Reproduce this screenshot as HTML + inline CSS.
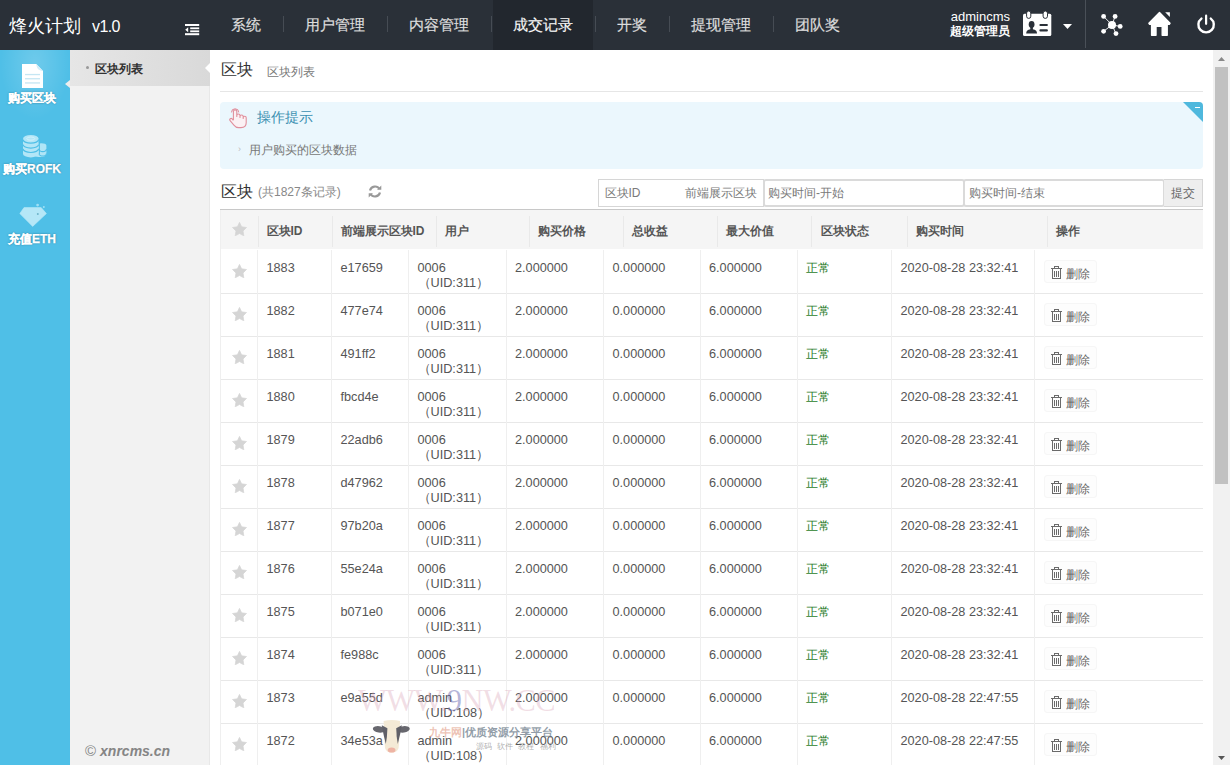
<!DOCTYPE html>
<html><head><meta charset="utf-8">
<style>
*{margin:0;padding:0;box-sizing:border-box}
html,body{width:1230px;height:765px;overflow:hidden;background:#fff;font-family:"Liberation Sans",sans-serif;font-size:12px;color:#555}
.a{position:absolute}
svg{display:block}
#hdr{position:absolute;left:0;top:0;width:1230px;height:50px;background:#2a3038}
.logo{position:absolute;left:9px;top:13.7px;color:#fff;font-size:18px;white-space:nowrap}
.logo span{font-size:16px;margin-left:11px;letter-spacing:-0.6px}
.nav{position:absolute;top:0;height:50px;line-height:49.5px;color:#ddd;font-size:15px;padding:0 20px;white-space:nowrap;-webkit-text-stroke:0.2px #ddd}
.nav.act{background:#22272e;color:#fff}
.nsep{position:absolute;top:16px;width:1px;height:15.5px;background:#464c54}
#side{position:absolute;left:0;top:50px;width:70px;height:715px;background:#4fbfe7}
.sitem{position:absolute;left:-3px;width:70px;text-align:center;color:#fff;font-weight:bold;font-size:12px;text-shadow:0 0 2px rgba(0,40,60,.55);-webkit-text-stroke:0.25px #fff;white-space:nowrap}
#sub{position:absolute;left:70px;top:50px;width:140px;height:715px;background:#f2f2f2;border-right:1px solid #e8e8e8}
.subact{position:absolute;left:70px;top:50px;width:140px;height:36px;background:linear-gradient(to right,#e6e6e6,#d9d9d9)}
.copy{position:absolute;left:85px;top:742px;color:#858585;font-size:14px;font-style:italic;font-weight:bold;white-space:nowrap}
.copy b{font-style:normal;font-weight:normal;font-size:15px;margin-right:4px}
.title{position:absolute;left:221px;top:60.3px;font-size:16px;color:#333}
.title small{font-size:12px;color:#777;margin-left:13.5px;position:relative;top:0.7px}
.hr{position:absolute;left:220px;top:91px;width:983px;height:1px;background:#e6e6e6}
.tip{position:absolute;left:220px;top:102px;width:983px;height:67px;background:#ebf7fd;border-radius:4px;overflow:hidden}
.thead{position:absolute;background:#f5f5f5}
.tborder{position:absolute;left:220px;top:208.5px;width:983px;height:1.5px;background:#c8c8c8}
.vsep{position:absolute;width:1px;background:#efefef}
.vsep.h{background:#e9e9e9}
.hline{position:absolute;height:1px;background:#e8e8e8}
.th{position:absolute;font-weight:bold;color:#555;white-space:nowrap}
.td{position:absolute;color:#555;line-height:15px;white-space:nowrap;font-size:12.7px}
.td .uid{font-size:12.7px}
.td .ok{font-size:12px;position:relative;left:-0.5px}
.uid{margin-left:0}
.ok{color:#2a7d2a}
.hstar,.bstar{position:absolute;line-height:0}
.del{position:absolute;width:53px;height:23px;border:1px solid #f6f6f6;border-radius:3px;background:#fdfdfd;color:#666;padding:5px 0 0 6px;white-space:nowrap;line-height:13px}
.del span{position:relative;top:1.5px}
.del svg{display:inline-block;vertical-align:top;margin-right:4px}
.inp{position:absolute;top:179px;height:28px;border:2px solid #dadada;border-radius:3px;background:#fff;color:#7a7a7a;line-height:25px;padding-left:4.5px;white-space:nowrap}
.btn{position:absolute;left:1164px;top:179px;width:39px;height:28px;border:1px solid #d6d6d6;border-left:0;background:#eee;color:#666;line-height:27px;text-align:center}
#sb{position:absolute;left:1213px;top:50px;width:17px;height:715px;background:#f1f1f1}
#thumb{position:absolute;left:1215px;top:67px;width:13px;height:417px;background:#c1c1c1}
</style></head><body>
<div id="hdr"></div>
<div class="logo">烽火计划<span>v1.0</span></div>
<div class="a" style="left:185px;top:24px"><svg width="15" height="12" viewBox="0 0 15 12"><rect x="0" y="0" width="14.2" height="2" fill="#fff"/><rect x="5.2" y="3.4" width="9" height="1.8" fill="#fff"/><rect x="5.2" y="6.4" width="9" height="1.8" fill="#fff"/><rect x="0" y="9.2" width="14.2" height="2" fill="#fff"/><path d="M3.2 3.3L0.2 5.8L3.2 8.3z" fill="#fff"/></svg></div>
<div class="nav" style="left:211px">系统</div>
<div class="nsep" style="left:283px"></div>
<div class="nav" style="left:285px">用户管理</div>
<div class="nsep" style="left:387px"></div>
<div class="nav" style="left:389px">内容管理</div>
<div class="nsep" style="left:491px"></div>
<div class="nav act" style="left:493px">成交记录</div>
<div class="nsep" style="left:595px"></div>
<div class="nav" style="left:597px">开奖</div>
<div class="nsep" style="left:669px"></div>
<div class="nav" style="left:671px">提现管理</div>
<div class="nsep" style="left:773px"></div>
<div class="nav" style="left:775px">团队奖</div>
<div class="a" style="left:940px;top:10px;width:70px;text-align:right;color:#fff;font-size:13px;line-height:14px">admincms</div>
<div class="a" style="left:940px;top:24px;width:70px;text-align:right;color:#fff;font-size:12px;font-weight:bold;line-height:14px">超级管理员</div>
<div class="a" style="left:1023px;top:11px"><svg width="29" height="26" viewBox="0 0 29 26">
<rect x="0" y="2.8" width="28.3" height="22.3" rx="1.5" fill="#fff"/>
<rect x="3.6" y="0" width="4.2" height="7.4" rx="2.1" fill="#fff" stroke="#2a3038" stroke-width="1"/>
<rect x="20.1" y="0" width="4.4" height="7.4" rx="2.2" fill="#fff" stroke="#2a3038" stroke-width="1"/>
<ellipse cx="8.6" cy="13.4" rx="2.9" ry="3.4" fill="#2a3038"/><rect x="7.3" y="15.5" width="2.6" height="3.5" fill="#2a3038"/><path d="M3.2 22.6C3.2 19.2 5.5 18.3 8.6 18.3S14 19.2 14 22.6z" fill="#2a3038"/>
<rect x="16.4" y="13.1" width="8.5" height="1.9" rx="0.9" fill="#2a3038"/><rect x="16.4" y="18.3" width="8.5" height="2.1" rx="1" fill="#2a3038"/></svg></div>
<div class="a" style="left:1063px;top:24px"><svg width="9" height="5"><path d="M0 0h9L4.5 5z" fill="#fff"/></svg></div>
<div class="a" style="left:1085px;top:0;width:1px;height:48px;background:#4a5058"></div>
<div class="a" style="left:1099px;top:12px"><svg width="26" height="26" viewBox="0 0 26 26">
<g stroke="#fff" stroke-width="0.9"><line x1="13" y1="12.9" x2="4.6" y2="4.4"/><line x1="13" y1="12.9" x2="16.1" y2="4.4"/><line x1="13" y1="12.9" x2="21.2" y2="14.4"/><line x1="13" y1="12.9" x2="4.6" y2="19.3"/><line x1="13" y1="12.9" x2="17" y2="21.6"/></g>
<g fill="#fff"><circle cx="13" cy="12.9" r="4"/><circle cx="4.6" cy="4.4" r="2.4"/><circle cx="16.1" cy="4.4" r="2.4"/><circle cx="21.2" cy="14.4" r="2.4"/><circle cx="4.6" cy="19.3" r="2.4"/><circle cx="17" cy="21.6" r="2.4"/></g></svg></div>
<div class="a" style="left:1144px;top:8px"><svg width="32" height="32" viewBox="0 0 32 32"><path d="M15.5 4.6L4.9 15.3L5.6 16.3H7.6V27.2H12V18.2H18.2V27.2H23.2V16.3H25.3L26 15.3z" fill="#fff" stroke="#fff" stroke-width="1.4" stroke-linejoin="round"/><path d="M21.2 4.2H25.9V9z" fill="#fff"/></svg></div>
<div class="a" style="left:1196px;top:14px"><svg width="21" height="21" viewBox="0 0 21 21"><path d="M5.4 4.6A7.7 7.7 0 1 0 14.8 4.6" fill="none" stroke="#fff" stroke-width="2.4" stroke-linecap="round"/><line x1="10.1" y1="1.7" x2="10.1" y2="9.8" stroke="#fff" stroke-width="2.2" stroke-linecap="round"/></svg></div>

<div id="side"></div>
<div class="a" style="left:0;top:50px;width:70px;height:70px;background:radial-gradient(ellipse at 50% 20%,rgba(255,255,255,.18),rgba(255,255,255,0) 70%)"></div>
<div class="a" style="left:22px;top:64px"><svg width="21" height="24" viewBox="0 0 21 24"><path d="M0 0h14.3l6.7 7v17H0z" fill="#fff"/><path d="M14.3 0C14.6 4.2 16.3 6.6 21 7z" fill="#d2edf8"/><g fill="#c5e6f3"><rect x="3" y="9.9" width="15" height="1.3"/><rect x="3" y="14.1" width="15" height="1.3"/><rect x="3" y="18.3" width="15" height="1.3"/></g></svg></div>
<div class="sitem" style="top:90px">购买区块</div>
<div class="a" style="left:22.5px;top:134.5px"><svg width="24" height="23" viewBox="0 0 24 23">
<g fill="#b0e5f6"><path d="M12 10.5C14 7.5 23.4 7.5 23.4 10.5V19.2C23.4 22.6 14 22.8 12 21z"/></g>
<path d="M16 14a3.7 2.6 0 0 0 7.4 0M16 18.4a3.7 2.6 0 0 0 7.4 0" fill="none" stroke="#4fbfe7" stroke-width="1.1"/>
<g fill="#b3e6f7"><path d="M0 3.7A7.8 3.7 0 0 1 15.6 3.7V18.7A7.8 3.7 0 0 1 0 18.7z"/></g>
<path d="M0 4.5a7.8 3.7 0 0 0 15.6 0M0 9.4a7.8 3.7 0 0 0 15.6 0M0 13.8a7.8 3.7 0 0 0 15.6 0" fill="none" stroke="#4fbfe7" stroke-width="1.2"/>
<path d="M16.4 4.5V19" stroke="#4fbfe7" stroke-width="1"/>
<ellipse cx="7.8" cy="3.6" rx="4" ry="1.6" fill="none" stroke="#d5f2fb" stroke-width=".8"/></svg></div>
<div class="sitem" style="top:161px">购买ROFK</div>
<div class="a" style="left:19px;top:203px"><svg width="28" height="24" viewBox="0 0 28 24"><path d="M5 4.6H22.2L27.4 10.6L13.7 23.4L0.8 10.6z" fill="#b5e7f7" stroke="#b5e7f7" stroke-width=".6" stroke-linejoin="round"/><circle cx="18.6" cy="2.1" r="1.4" fill="#9fe0f6"/><circle cx="24.8" cy="3.9" r="1" fill="#9fe0f6"/><circle cx="18.8" cy="11" r="1" fill="#6fb5c9"/></svg></div>
<div class="sitem" style="top:231px">充值ETH</div>
<div class="a" style="left:65px;top:80px;width:0;height:0;border-top:4px solid transparent;border-bottom:4px solid transparent;border-right:5px solid #ededed"></div>

<div id="sub"></div>
<div class="subact"></div>
<div class="a" style="left:86px;top:66px;width:3px;height:3px;border-radius:50%;background:#999"></div>
<div class="a" style="left:95px;top:61px;font-weight:bold;color:#333;font-size:12px">区块列表</div>
<div class="a" style="left:205px;top:63px;width:0;height:0;border-top:5px solid transparent;border-bottom:5px solid transparent;border-right:5px solid #fff"></div>
<div class="copy"><b>©</b>xnrcms.cn</div>

<div class="title">区块<small>区块列表</small></div>
<div class="hr"></div>
<div class="tip">
<div class="a" style="right:0;top:0;width:0;height:0;border-top:20px solid #4fb8dd;border-left:20px solid transparent"></div>
<div class="a" style="right:3px;top:5px;width:5px;height:1px;background:#fff"></div>
</div>
<div class="a" style="left:229px;top:107px"><svg width="19" height="22" viewBox="0 0 19 22"><path d="M4.4 13V4.6A1.7 1.7 0 0 1 7.8 4.6V9.4V8.6A1.6 1.6 0 0 1 11 8.6V10.4V9.6A1.6 1.6 0 0 1 14.2 9.6V11.4V10.8A1.5 1.5 0 0 1 17.2 10.8V15.8C17.2 19 15 20.6 12 20.6H9.6C7.4 20.6 6.1 19.7 4.9 18.1L1.1 13.6A1.3 1.3 0 0 1 3.1 11.9L4.4 13.4" fill="#fbf1f4" stroke="#e08f9c" stroke-width="1.1" stroke-linejoin="round"/><path d="M2.5 5.4A3.6 3.6 0 0 1 9.7 5.4" fill="none" stroke="#e08796" stroke-width="1"/></svg></div>
<div class="a" style="left:257px;top:109px;font-size:14px;color:#3a8fb0">操作提示</div>
<div class="a" style="left:238px;top:144px;font-size:9px;color:#bbb">›</div>
<div class="a" style="left:249px;top:142px;font-size:12px;color:#777">用户购买的区块数据</div>

<div class="a" style="left:221px;top:182px;font-size:16px;color:#333">区块</div>
<div class="a" style="left:258px;top:184px;font-size:12px;color:#888">(共1827条记录)</div>
<div class="a" style="left:368px;top:185px"><svg width="14" height="13" viewBox="0 0 14 13"><path d="M2 5.5A5.2 5.2 0 0 1 11.5 4M12 7.5A5.2 5.2 0 0 1 2.5 9" fill="none" stroke="#999" stroke-width="2.2"/><path d="M9 4.8h4.3V0.5zM5 8.2H0.7v4.3z" fill="#999"/></svg></div>
<div class="inp" style="left:598px;width:166px;border:1px solid #d6d6d6;border-radius:0;line-height:27px;padding-left:5.5px">区块ID<span style="position:absolute;left:86px">前端展示区块</span></div>
<div class="inp" style="left:763px;width:202px;padding-left:3px">购买时间-开始</div>
<div class="inp" style="left:963px;width:202px;padding-left:4px">购买时间-结束</div>
<div class="btn">提交</div>
<div class="tborder"></div>
<div class="thead" style="left:220px;top:210px;width:983px;height:39px"></div>
<div class="vsep h" style="left:257.5px;top:216px;height:31px"></div>
<div class="vsep h" style="left:331.5px;top:216px;height:31px"></div>
<div class="vsep h" style="left:435.5px;top:216px;height:31px"></div>
<div class="vsep h" style="left:528.5px;top:216px;height:31px"></div>
<div class="vsep h" style="left:623.0px;top:216px;height:31px"></div>
<div class="vsep h" style="left:717.0px;top:216px;height:31px"></div>
<div class="vsep h" style="left:810.8px;top:216px;height:31px"></div>
<div class="vsep h" style="left:906.9px;top:216px;height:31px"></div>
<div class="vsep h" style="left:1047.0px;top:216px;height:31px"></div>
<div class="hstar" style="left:231.5px;top:221.5px"><svg width="15" height="14" viewBox="0 0 24 22.4"><path d="M12 0.6l3.4 7.1 7.8 1.1-5.6 5.5 1.3 7.8L12 18.4l-6.9 3.7 1.3-7.8L0.8 8.8l7.8-1.1z" fill="#d5d5d5" stroke="#d5d5d5" stroke-width="1.2" stroke-linejoin="round"/></svg></div>
<div class="th" style="left:266.5px;top:222.5px">区块ID</div>
<div class="th" style="left:340.5px;top:222.5px">前端展示区块ID</div>
<div class="th" style="left:444.5px;top:222.5px">用户</div>
<div class="th" style="left:537.5px;top:222.5px">购买价格</div>
<div class="th" style="left:632.0px;top:222.5px">总收益</div>
<div class="th" style="left:726.0px;top:222.5px">最大价值</div>
<div class="th" style="left:821.3px;top:222.5px">区块状态</div>
<div class="th" style="left:915.9px;top:222.5px">购买时间</div>
<div class="th" style="left:1056.0px;top:222.5px">操作</div>
<div class="hline" style="left:220px;top:293px;width:983px"></div>
<div class="bstar" style="left:231.5px;top:263.5px"><svg width="15" height="14" viewBox="0 0 24 22.4"><path d="M12 0.6l3.4 7.1 7.8 1.1-5.6 5.5 1.3 7.8L12 18.4l-6.9 3.7 1.3-7.8L0.8 8.8l7.8-1.1z" fill="#d5d5d5" stroke="#d5d5d5" stroke-width="1.2" stroke-linejoin="round"/></svg></div>
<div class="td" style="left:266.5px;top:261px">1883</div>
<div class="td" style="left:340.5px;top:261px">e17659</div>
<div class="td" style="left:417.5px;top:261px">0006<br><span class="uid">（UID:311）</span></div>
<div class="td" style="left:515.0px;top:261px">2.000000</div>
<div class="td" style="left:612.5px;top:261px">0.000000</div>
<div class="td" style="left:709.0px;top:261px">6.000000</div>
<div class="td" style="left:806.0px;top:261px"><span class="ok">正常</span></div>
<div class="td" style="left:900.5px;top:261px">2020-08-28 23:32:41</div>
<div class="del" style="left:1044px;top:260px"><svg width="11" height="13" viewBox="0 0 11 13" fill="#6a6a6a"><rect x="0" y="2" width="11" height="1"/><rect x="3" y="0" width="5" height="1"/><rect x="3" y="0" width="1" height="2"/><rect x="7" y="0" width="1" height="2"/><rect x="1" y="3" width="1" height="10"/><rect x="9" y="3" width="1" height="10"/><rect x="1" y="12" width="9" height="1"/><rect x="3" y="5" width="1" height="6"/><rect x="5" y="5" width="1" height="6"/><rect x="7" y="5" width="1" height="6"/></svg><span>删除</span></div>
<div class="hline" style="left:220px;top:336px;width:983px"></div>
<div class="bstar" style="left:231.5px;top:306.5px"><svg width="15" height="14" viewBox="0 0 24 22.4"><path d="M12 0.6l3.4 7.1 7.8 1.1-5.6 5.5 1.3 7.8L12 18.4l-6.9 3.7 1.3-7.8L0.8 8.8l7.8-1.1z" fill="#d5d5d5" stroke="#d5d5d5" stroke-width="1.2" stroke-linejoin="round"/></svg></div>
<div class="td" style="left:266.5px;top:304px">1882</div>
<div class="td" style="left:340.5px;top:304px">477e74</div>
<div class="td" style="left:417.5px;top:304px">0006<br><span class="uid">（UID:311）</span></div>
<div class="td" style="left:515.0px;top:304px">2.000000</div>
<div class="td" style="left:612.5px;top:304px">0.000000</div>
<div class="td" style="left:709.0px;top:304px">6.000000</div>
<div class="td" style="left:806.0px;top:304px"><span class="ok">正常</span></div>
<div class="td" style="left:900.5px;top:304px">2020-08-28 23:32:41</div>
<div class="del" style="left:1044px;top:303px"><svg width="11" height="13" viewBox="0 0 11 13" fill="#6a6a6a"><rect x="0" y="2" width="11" height="1"/><rect x="3" y="0" width="5" height="1"/><rect x="3" y="0" width="1" height="2"/><rect x="7" y="0" width="1" height="2"/><rect x="1" y="3" width="1" height="10"/><rect x="9" y="3" width="1" height="10"/><rect x="1" y="12" width="9" height="1"/><rect x="3" y="5" width="1" height="6"/><rect x="5" y="5" width="1" height="6"/><rect x="7" y="5" width="1" height="6"/></svg><span>删除</span></div>
<div class="hline" style="left:220px;top:379px;width:983px"></div>
<div class="bstar" style="left:231.5px;top:349.5px"><svg width="15" height="14" viewBox="0 0 24 22.4"><path d="M12 0.6l3.4 7.1 7.8 1.1-5.6 5.5 1.3 7.8L12 18.4l-6.9 3.7 1.3-7.8L0.8 8.8l7.8-1.1z" fill="#d5d5d5" stroke="#d5d5d5" stroke-width="1.2" stroke-linejoin="round"/></svg></div>
<div class="td" style="left:266.5px;top:347px">1881</div>
<div class="td" style="left:340.5px;top:347px">491ff2</div>
<div class="td" style="left:417.5px;top:347px">0006<br><span class="uid">（UID:311）</span></div>
<div class="td" style="left:515.0px;top:347px">2.000000</div>
<div class="td" style="left:612.5px;top:347px">0.000000</div>
<div class="td" style="left:709.0px;top:347px">6.000000</div>
<div class="td" style="left:806.0px;top:347px"><span class="ok">正常</span></div>
<div class="td" style="left:900.5px;top:347px">2020-08-28 23:32:41</div>
<div class="del" style="left:1044px;top:346px"><svg width="11" height="13" viewBox="0 0 11 13" fill="#6a6a6a"><rect x="0" y="2" width="11" height="1"/><rect x="3" y="0" width="5" height="1"/><rect x="3" y="0" width="1" height="2"/><rect x="7" y="0" width="1" height="2"/><rect x="1" y="3" width="1" height="10"/><rect x="9" y="3" width="1" height="10"/><rect x="1" y="12" width="9" height="1"/><rect x="3" y="5" width="1" height="6"/><rect x="5" y="5" width="1" height="6"/><rect x="7" y="5" width="1" height="6"/></svg><span>删除</span></div>
<div class="hline" style="left:220px;top:422px;width:983px"></div>
<div class="bstar" style="left:231.5px;top:392.5px"><svg width="15" height="14" viewBox="0 0 24 22.4"><path d="M12 0.6l3.4 7.1 7.8 1.1-5.6 5.5 1.3 7.8L12 18.4l-6.9 3.7 1.3-7.8L0.8 8.8l7.8-1.1z" fill="#d5d5d5" stroke="#d5d5d5" stroke-width="1.2" stroke-linejoin="round"/></svg></div>
<div class="td" style="left:266.5px;top:390px">1880</div>
<div class="td" style="left:340.5px;top:390px">fbcd4e</div>
<div class="td" style="left:417.5px;top:390px">0006<br><span class="uid">（UID:311）</span></div>
<div class="td" style="left:515.0px;top:390px">2.000000</div>
<div class="td" style="left:612.5px;top:390px">0.000000</div>
<div class="td" style="left:709.0px;top:390px">6.000000</div>
<div class="td" style="left:806.0px;top:390px"><span class="ok">正常</span></div>
<div class="td" style="left:900.5px;top:390px">2020-08-28 23:32:41</div>
<div class="del" style="left:1044px;top:389px"><svg width="11" height="13" viewBox="0 0 11 13" fill="#6a6a6a"><rect x="0" y="2" width="11" height="1"/><rect x="3" y="0" width="5" height="1"/><rect x="3" y="0" width="1" height="2"/><rect x="7" y="0" width="1" height="2"/><rect x="1" y="3" width="1" height="10"/><rect x="9" y="3" width="1" height="10"/><rect x="1" y="12" width="9" height="1"/><rect x="3" y="5" width="1" height="6"/><rect x="5" y="5" width="1" height="6"/><rect x="7" y="5" width="1" height="6"/></svg><span>删除</span></div>
<div class="hline" style="left:220px;top:465px;width:983px"></div>
<div class="bstar" style="left:231.5px;top:435.5px"><svg width="15" height="14" viewBox="0 0 24 22.4"><path d="M12 0.6l3.4 7.1 7.8 1.1-5.6 5.5 1.3 7.8L12 18.4l-6.9 3.7 1.3-7.8L0.8 8.8l7.8-1.1z" fill="#d5d5d5" stroke="#d5d5d5" stroke-width="1.2" stroke-linejoin="round"/></svg></div>
<div class="td" style="left:266.5px;top:433px">1879</div>
<div class="td" style="left:340.5px;top:433px">22adb6</div>
<div class="td" style="left:417.5px;top:433px">0006<br><span class="uid">（UID:311）</span></div>
<div class="td" style="left:515.0px;top:433px">2.000000</div>
<div class="td" style="left:612.5px;top:433px">0.000000</div>
<div class="td" style="left:709.0px;top:433px">6.000000</div>
<div class="td" style="left:806.0px;top:433px"><span class="ok">正常</span></div>
<div class="td" style="left:900.5px;top:433px">2020-08-28 23:32:41</div>
<div class="del" style="left:1044px;top:432px"><svg width="11" height="13" viewBox="0 0 11 13" fill="#6a6a6a"><rect x="0" y="2" width="11" height="1"/><rect x="3" y="0" width="5" height="1"/><rect x="3" y="0" width="1" height="2"/><rect x="7" y="0" width="1" height="2"/><rect x="1" y="3" width="1" height="10"/><rect x="9" y="3" width="1" height="10"/><rect x="1" y="12" width="9" height="1"/><rect x="3" y="5" width="1" height="6"/><rect x="5" y="5" width="1" height="6"/><rect x="7" y="5" width="1" height="6"/></svg><span>删除</span></div>
<div class="hline" style="left:220px;top:508px;width:983px"></div>
<div class="bstar" style="left:231.5px;top:478.5px"><svg width="15" height="14" viewBox="0 0 24 22.4"><path d="M12 0.6l3.4 7.1 7.8 1.1-5.6 5.5 1.3 7.8L12 18.4l-6.9 3.7 1.3-7.8L0.8 8.8l7.8-1.1z" fill="#d5d5d5" stroke="#d5d5d5" stroke-width="1.2" stroke-linejoin="round"/></svg></div>
<div class="td" style="left:266.5px;top:476px">1878</div>
<div class="td" style="left:340.5px;top:476px">d47962</div>
<div class="td" style="left:417.5px;top:476px">0006<br><span class="uid">（UID:311）</span></div>
<div class="td" style="left:515.0px;top:476px">2.000000</div>
<div class="td" style="left:612.5px;top:476px">0.000000</div>
<div class="td" style="left:709.0px;top:476px">6.000000</div>
<div class="td" style="left:806.0px;top:476px"><span class="ok">正常</span></div>
<div class="td" style="left:900.5px;top:476px">2020-08-28 23:32:41</div>
<div class="del" style="left:1044px;top:475px"><svg width="11" height="13" viewBox="0 0 11 13" fill="#6a6a6a"><rect x="0" y="2" width="11" height="1"/><rect x="3" y="0" width="5" height="1"/><rect x="3" y="0" width="1" height="2"/><rect x="7" y="0" width="1" height="2"/><rect x="1" y="3" width="1" height="10"/><rect x="9" y="3" width="1" height="10"/><rect x="1" y="12" width="9" height="1"/><rect x="3" y="5" width="1" height="6"/><rect x="5" y="5" width="1" height="6"/><rect x="7" y="5" width="1" height="6"/></svg><span>删除</span></div>
<div class="hline" style="left:220px;top:551px;width:983px"></div>
<div class="bstar" style="left:231.5px;top:521.5px"><svg width="15" height="14" viewBox="0 0 24 22.4"><path d="M12 0.6l3.4 7.1 7.8 1.1-5.6 5.5 1.3 7.8L12 18.4l-6.9 3.7 1.3-7.8L0.8 8.8l7.8-1.1z" fill="#d5d5d5" stroke="#d5d5d5" stroke-width="1.2" stroke-linejoin="round"/></svg></div>
<div class="td" style="left:266.5px;top:519px">1877</div>
<div class="td" style="left:340.5px;top:519px">97b20a</div>
<div class="td" style="left:417.5px;top:519px">0006<br><span class="uid">（UID:311）</span></div>
<div class="td" style="left:515.0px;top:519px">2.000000</div>
<div class="td" style="left:612.5px;top:519px">0.000000</div>
<div class="td" style="left:709.0px;top:519px">6.000000</div>
<div class="td" style="left:806.0px;top:519px"><span class="ok">正常</span></div>
<div class="td" style="left:900.5px;top:519px">2020-08-28 23:32:41</div>
<div class="del" style="left:1044px;top:518px"><svg width="11" height="13" viewBox="0 0 11 13" fill="#6a6a6a"><rect x="0" y="2" width="11" height="1"/><rect x="3" y="0" width="5" height="1"/><rect x="3" y="0" width="1" height="2"/><rect x="7" y="0" width="1" height="2"/><rect x="1" y="3" width="1" height="10"/><rect x="9" y="3" width="1" height="10"/><rect x="1" y="12" width="9" height="1"/><rect x="3" y="5" width="1" height="6"/><rect x="5" y="5" width="1" height="6"/><rect x="7" y="5" width="1" height="6"/></svg><span>删除</span></div>
<div class="hline" style="left:220px;top:594px;width:983px"></div>
<div class="bstar" style="left:231.5px;top:564.5px"><svg width="15" height="14" viewBox="0 0 24 22.4"><path d="M12 0.6l3.4 7.1 7.8 1.1-5.6 5.5 1.3 7.8L12 18.4l-6.9 3.7 1.3-7.8L0.8 8.8l7.8-1.1z" fill="#d5d5d5" stroke="#d5d5d5" stroke-width="1.2" stroke-linejoin="round"/></svg></div>
<div class="td" style="left:266.5px;top:562px">1876</div>
<div class="td" style="left:340.5px;top:562px">55e24a</div>
<div class="td" style="left:417.5px;top:562px">0006<br><span class="uid">（UID:311）</span></div>
<div class="td" style="left:515.0px;top:562px">2.000000</div>
<div class="td" style="left:612.5px;top:562px">0.000000</div>
<div class="td" style="left:709.0px;top:562px">6.000000</div>
<div class="td" style="left:806.0px;top:562px"><span class="ok">正常</span></div>
<div class="td" style="left:900.5px;top:562px">2020-08-28 23:32:41</div>
<div class="del" style="left:1044px;top:561px"><svg width="11" height="13" viewBox="0 0 11 13" fill="#6a6a6a"><rect x="0" y="2" width="11" height="1"/><rect x="3" y="0" width="5" height="1"/><rect x="3" y="0" width="1" height="2"/><rect x="7" y="0" width="1" height="2"/><rect x="1" y="3" width="1" height="10"/><rect x="9" y="3" width="1" height="10"/><rect x="1" y="12" width="9" height="1"/><rect x="3" y="5" width="1" height="6"/><rect x="5" y="5" width="1" height="6"/><rect x="7" y="5" width="1" height="6"/></svg><span>删除</span></div>
<div class="hline" style="left:220px;top:637px;width:983px"></div>
<div class="bstar" style="left:231.5px;top:607.5px"><svg width="15" height="14" viewBox="0 0 24 22.4"><path d="M12 0.6l3.4 7.1 7.8 1.1-5.6 5.5 1.3 7.8L12 18.4l-6.9 3.7 1.3-7.8L0.8 8.8l7.8-1.1z" fill="#d5d5d5" stroke="#d5d5d5" stroke-width="1.2" stroke-linejoin="round"/></svg></div>
<div class="td" style="left:266.5px;top:605px">1875</div>
<div class="td" style="left:340.5px;top:605px">b071e0</div>
<div class="td" style="left:417.5px;top:605px">0006<br><span class="uid">（UID:311）</span></div>
<div class="td" style="left:515.0px;top:605px">2.000000</div>
<div class="td" style="left:612.5px;top:605px">0.000000</div>
<div class="td" style="left:709.0px;top:605px">6.000000</div>
<div class="td" style="left:806.0px;top:605px"><span class="ok">正常</span></div>
<div class="td" style="left:900.5px;top:605px">2020-08-28 23:32:41</div>
<div class="del" style="left:1044px;top:604px"><svg width="11" height="13" viewBox="0 0 11 13" fill="#6a6a6a"><rect x="0" y="2" width="11" height="1"/><rect x="3" y="0" width="5" height="1"/><rect x="3" y="0" width="1" height="2"/><rect x="7" y="0" width="1" height="2"/><rect x="1" y="3" width="1" height="10"/><rect x="9" y="3" width="1" height="10"/><rect x="1" y="12" width="9" height="1"/><rect x="3" y="5" width="1" height="6"/><rect x="5" y="5" width="1" height="6"/><rect x="7" y="5" width="1" height="6"/></svg><span>删除</span></div>
<div class="hline" style="left:220px;top:680px;width:983px"></div>
<div class="bstar" style="left:231.5px;top:650.5px"><svg width="15" height="14" viewBox="0 0 24 22.4"><path d="M12 0.6l3.4 7.1 7.8 1.1-5.6 5.5 1.3 7.8L12 18.4l-6.9 3.7 1.3-7.8L0.8 8.8l7.8-1.1z" fill="#d5d5d5" stroke="#d5d5d5" stroke-width="1.2" stroke-linejoin="round"/></svg></div>
<div class="td" style="left:266.5px;top:648px">1874</div>
<div class="td" style="left:340.5px;top:648px">fe988c</div>
<div class="td" style="left:417.5px;top:648px">0006<br><span class="uid">（UID:311）</span></div>
<div class="td" style="left:515.0px;top:648px">2.000000</div>
<div class="td" style="left:612.5px;top:648px">0.000000</div>
<div class="td" style="left:709.0px;top:648px">6.000000</div>
<div class="td" style="left:806.0px;top:648px"><span class="ok">正常</span></div>
<div class="td" style="left:900.5px;top:648px">2020-08-28 23:32:41</div>
<div class="del" style="left:1044px;top:647px"><svg width="11" height="13" viewBox="0 0 11 13" fill="#6a6a6a"><rect x="0" y="2" width="11" height="1"/><rect x="3" y="0" width="5" height="1"/><rect x="3" y="0" width="1" height="2"/><rect x="7" y="0" width="1" height="2"/><rect x="1" y="3" width="1" height="10"/><rect x="9" y="3" width="1" height="10"/><rect x="1" y="12" width="9" height="1"/><rect x="3" y="5" width="1" height="6"/><rect x="5" y="5" width="1" height="6"/><rect x="7" y="5" width="1" height="6"/></svg><span>删除</span></div>
<div class="hline" style="left:220px;top:723px;width:983px"></div>
<div class="bstar" style="left:231.5px;top:693.5px"><svg width="15" height="14" viewBox="0 0 24 22.4"><path d="M12 0.6l3.4 7.1 7.8 1.1-5.6 5.5 1.3 7.8L12 18.4l-6.9 3.7 1.3-7.8L0.8 8.8l7.8-1.1z" fill="#d5d5d5" stroke="#d5d5d5" stroke-width="1.2" stroke-linejoin="round"/></svg></div>
<div class="td" style="left:266.5px;top:691px">1873</div>
<div class="td" style="left:340.5px;top:691px">e9a55d</div>
<div class="td" style="left:417.5px;top:691px">admin<br><span class="uid">（UID:108）</span></div>
<div class="td" style="left:515.0px;top:691px">2.000000</div>
<div class="td" style="left:612.5px;top:691px">0.000000</div>
<div class="td" style="left:709.0px;top:691px">6.000000</div>
<div class="td" style="left:806.0px;top:691px"><span class="ok">正常</span></div>
<div class="td" style="left:900.5px;top:691px">2020-08-28 22:47:55</div>
<div class="del" style="left:1044px;top:690px"><svg width="11" height="13" viewBox="0 0 11 13" fill="#6a6a6a"><rect x="0" y="2" width="11" height="1"/><rect x="3" y="0" width="5" height="1"/><rect x="3" y="0" width="1" height="2"/><rect x="7" y="0" width="1" height="2"/><rect x="1" y="3" width="1" height="10"/><rect x="9" y="3" width="1" height="10"/><rect x="1" y="12" width="9" height="1"/><rect x="3" y="5" width="1" height="6"/><rect x="5" y="5" width="1" height="6"/><rect x="7" y="5" width="1" height="6"/></svg><span>删除</span></div>
<div class="hline" style="left:220px;top:766px;width:983px"></div>
<div class="bstar" style="left:231.5px;top:736.5px"><svg width="15" height="14" viewBox="0 0 24 22.4"><path d="M12 0.6l3.4 7.1 7.8 1.1-5.6 5.5 1.3 7.8L12 18.4l-6.9 3.7 1.3-7.8L0.8 8.8l7.8-1.1z" fill="#d5d5d5" stroke="#d5d5d5" stroke-width="1.2" stroke-linejoin="round"/></svg></div>
<div class="td" style="left:266.5px;top:734px">1872</div>
<div class="td" style="left:340.5px;top:734px">34e53a</div>
<div class="td" style="left:417.5px;top:734px">admin<br><span class="uid">（UID:108）</span></div>
<div class="td" style="left:515.0px;top:734px">2.000000</div>
<div class="td" style="left:612.5px;top:734px">0.000000</div>
<div class="td" style="left:709.0px;top:734px">6.000000</div>
<div class="td" style="left:806.0px;top:734px"><span class="ok">正常</span></div>
<div class="td" style="left:900.5px;top:734px">2020-08-28 22:47:55</div>
<div class="del" style="left:1044px;top:733px"><svg width="11" height="13" viewBox="0 0 11 13" fill="#6a6a6a"><rect x="0" y="2" width="11" height="1"/><rect x="3" y="0" width="5" height="1"/><rect x="3" y="0" width="1" height="2"/><rect x="7" y="0" width="1" height="2"/><rect x="1" y="3" width="1" height="10"/><rect x="9" y="3" width="1" height="10"/><rect x="1" y="12" width="9" height="1"/><rect x="3" y="5" width="1" height="6"/><rect x="5" y="5" width="1" height="6"/><rect x="7" y="5" width="1" height="6"/></svg><span>删除</span></div>
<div class="vsep b" style="left:257px;top:250px;height:515px"></div>
<div class="vsep b" style="left:331px;top:250px;height:515px"></div>
<div class="vsep b" style="left:408px;top:250px;height:515px"></div>
<div class="vsep b" style="left:505.5px;top:250px;height:515px"></div>
<div class="vsep b" style="left:603px;top:250px;height:515px"></div>
<div class="vsep b" style="left:699.5px;top:250px;height:515px"></div>
<div class="vsep b" style="left:796.5px;top:250px;height:515px"></div>
<div class="vsep b" style="left:891px;top:250px;height:515px"></div>
<div class="vsep b" style="left:1034px;top:250px;height:515px"></div>
<div class="vsep b" style="left:220px;top:210px;height:555px"></div>

<div class="a" style="left:358px;top:683px;font-family:'Liberation Serif',serif;font-size:31px;color:rgba(215,160,180,.35);white-space:nowrap;transform:scaleX(.98);transform-origin:0 0;letter-spacing:-0.5px">WWW.<span style="color:rgba(90,90,170,.45)">9</span>NW.CC</div>
<div class="a" style="left:366px;top:712px"><svg width="50" height="50" viewBox="0 0 50 50">
<ellipse cx="13" cy="17.4" rx="6.2" ry="3.2" fill="#67676e" transform="rotate(8 13 17.4)"/><ellipse cx="37.6" cy="17.4" rx="6.2" ry="3.2" fill="#67676e" transform="rotate(-8 37.6 17.4)"/>
<path d="M17.6 9Q25.8 6.8 34 9L33.6 20Q33.2 30 32.6 36Q31.2 40.6 25.8 40.7Q20.4 40.6 19 36Q18.4 30 18 20z" fill="#f4ead6"/>
<path d="M15.8 13.2L21.4 16.2Q21.2 25 19.8 32Q17.2 22 15.8 13.2z" fill="#606068"/><path d="M35.8 13.2L30.2 16.2Q30.4 25 31.8 32Q34.4 22 35.8 13.2z" fill="#606068"/>
<ellipse cx="25.6" cy="38" rx="3.9" ry="2.6" fill="#eeb4a4"/></svg></div>
<div class="a" style="left:429px;top:725px;font-size:11px;font-weight:bold;white-space:nowrap;color:rgba(110,125,140,.75)"><span style="color:rgba(230,170,150,.7)">九牛网</span>|优质资源分享平台</div>
<div class="a" style="left:476px;top:741px;font-size:8px;white-space:nowrap;color:rgba(120,120,120,.6);word-spacing:3px">源码 软件 教程 福利</div>
<div id="sb"></div>
<div id="thumb"></div>
<div class="a" style="left:1218px;top:57px"><svg width="7" height="4"><path d="M0 4h7L3.5 0z" fill="#888"/></svg></div>
<div class="a" style="left:1218px;top:755.5px"><svg width="7" height="4"><path d="M0 0h7L3.5 4z" fill="#555"/></svg></div>
</body></html>
